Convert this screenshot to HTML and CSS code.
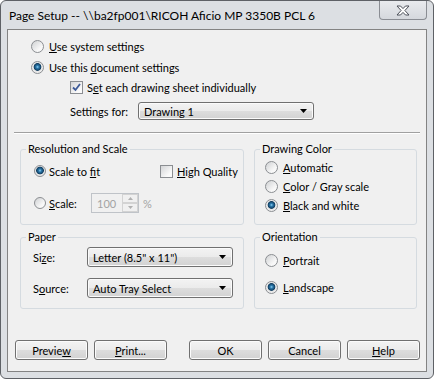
FILE: index.html
```html
<!DOCTYPE html>
<html lang="en">
<head>
    <meta charset="UTF-8">
    <meta name="viewport" content="width=device-width, initial-scale=1.0">
    <title>Page Setup</title>
    <link rel="stylesheet" href="styles.css">
</head>
<body>
    <div class="window">
        <div class="titlebar">
            <span class="title">Page Setup -- \\ba2fp001\RICOH Aficio MP 3350B PCL 6</span>
            <div class="close-btn">
                <svg width="14" height="11" viewBox="0 0 14 11">
                    <path d="M1 1 H4.5 L7 3.6 L9.5 1 H13 L8.9 5.5 L13 10 H9.5 L7 7.4 L4.5 10 H1 L5.1 5.5 Z" fill="#fff" stroke="#4b4f58" stroke-width="1" stroke-linejoin="round"/>
                </svg>
            </div>
        </div>

        <div class="client">
            <div class="top">
                <div class="row">
                    <span class="radio"></span>
                    <span><u>U</u>se system settings</span>
                </div>
                <div class="row row-2">
                    <span class="radio on"></span>
                    <span>Use this <u>d</u>ocument settings</span>
                </div>
                <div class="row row-indent">
                    <span class="check on">
                        <svg width="11" height="11" viewBox="0 0 11 11"><path d="M2 5.5 L4.5 8 L9 2" fill="none" stroke="#3d5a98" stroke-width="1.8"/></svg>
                    </span>
                    <span>S<u>e</u>t each drawing sheet individually</span>
                </div>
                <div class="row row-indent row-settings">
                    <span class="settings-label">Settings for:</span>
                    <div class="combo combo-wide">
                        <span>Drawing 1</span>
                        <svg width="7" height="4" viewBox="0 0 7 4"><path d="M0 0 H7 L3.5 4 Z" fill="#000"/></svg>
                    </div>
                </div>
            </div>

            <div class="sep"></div>

            <div class="groups">
                <fieldset class="group">
                    <legend>Resolution and Scale</legend>
                    <div class="group-body res-body">
                        <div class="row">
                            <span class="radio on res-radio"></span>
                            <span class="fit-label">Scale to <u>f</u>it</span>
                            <span class="check"></span>
                            <span><u>H</u>igh Quality</span>
                        </div>
                        <div class="row res-scale">
                            <span class="radio res-radio"></span>
                            <span class="scale-label"><u>S</u>cale:</span>
                            <div class="spin">
                                <span class="spin-value">100</span>
                                <div class="spin-btns">
                                    <span class="spin-btn"><svg width="5" height="3" viewBox="0 0 5 3"><path d="M0 3 H5 L2.5 0 Z" fill="#b0b0b0"/></svg></span>
                                    <span class="spin-btn"><svg width="5" height="3" viewBox="0 0 5 3"><path d="M0 0 H5 L2.5 3 Z" fill="#b0b0b0"/></svg></span>
                                </div>
                            </div>
                            <span class="disabled">%</span>
                        </div>
                    </div>
                </fieldset>

                <fieldset class="group">
                    <legend>Drawing Color</legend>
                    <div class="group-body color-body">
                        <div class="row">
                            <span class="radio"></span>
                            <span><u>A</u>utomatic</span>
                        </div>
                        <div class="row">
                            <span class="radio"></span>
                            <span><u>C</u>olor / Gray scale</span>
                        </div>
                        <div class="row">
                            <span class="radio on"></span>
                            <span><u>B</u>lack and white</span>
                        </div>
                    </div>
                </fieldset>

                <fieldset class="group">
                    <legend>Paper</legend>
                    <div class="group-body paper-body">
                        <div class="row">
                            <span class="field-label">Si<u>z</u>e:</span>
                            <div class="combo">
                                <span>Letter (8.5" x 11")</span>
                                <svg width="7" height="4" viewBox="0 0 7 4"><path d="M0 0 H7 L3.5 4 Z" fill="#000"/></svg>
                            </div>
                        </div>
                        <div class="row">
                            <span class="field-label">S<u>o</u>urce:</span>
                            <div class="combo">
                                <span>Auto Tray Select</span>
                                <svg width="7" height="4" viewBox="0 0 7 4"><path d="M0 0 H7 L3.5 4 Z" fill="#000"/></svg>
                            </div>
                        </div>
                    </div>
                </fieldset>

                <fieldset class="group">
                    <legend>Orientation</legend>
                    <div class="group-body orient-body">
                        <div class="row">
                            <span class="radio"></span>
                            <span><u>P</u>ortrait</span>
                        </div>
                        <div class="row">
                            <span class="radio on"></span>
                            <span><u>L</u>andscape</span>
                        </div>
                    </div>
                </fieldset>
            </div>

            <div class="buttons">
                <button class="btn">Previe<u>w</u></button>
                <button class="btn"><u>P</u>rint...</button>
                <button class="btn btn-ok">OK</button>
                <button class="btn">Cancel</button>
                <button class="btn"><u>H</u>elp</button>
            </div>
        </div>
    </div>
</body>
</html>
```

FILE: styles.css
```css
body {
    margin: 0;
    background: #fff;
    font-family: Lato, "Liberation Sans", sans-serif;
    font-size: 11px;
    color: #000;
}
.window {
    box-sizing: border-box;
    width: 434px;
    height: 379px;
    border: 1px solid #5e6166;
    border-radius: 6px;
    background: #dcdfe3;
    padding: 0 6px 6px 6px;
    display: flex;
    flex-direction: column;
}
.titlebar {
    height: 28px;
    display: flex;
    justify-content: space-between;
    align-items: flex-start;
}
.title {
    padding: 7px 0 0 2px;
    font-size: 12px;
    line-height: 16px;
}
.close-btn {
    box-sizing: border-box;
    width: 48px;
    height: 19px;
    border: 1px solid #8a8d93;
    border-top: none;
    border-radius: 0 0 4px 4px;
    background: linear-gradient(#e9ebee, #d5d8dd);
    display: flex;
    align-items: center;
    justify-content: center;
}
.client {
    flex: 1;
    border: 1px solid #838383;
    background: #f0f0f0;
    display: flex;
    flex-direction: column;
}
.row {
    height: 20px;
    display: flex;
    align-items: center;
    white-space: nowrap;
}
.top {
    padding: 6px 0 0 23px;
}
.row-2 {
    margin-top: 1px;
}
.row-indent {
    padding-left: 39px;
}
.row-settings {
    margin-top: 4px;
}
.settings-label {
    width: 68px;
}
.radio {
    box-sizing: border-box;
    width: 13px;
    height: 13px;
    border-radius: 50%;
    border: 1px solid #8b8e92;
    background: linear-gradient(135deg, #cfd1d3, #f8f8f8 70%);
    margin-right: 5px;
    flex: none;
}
.radio.on {
    background: radial-gradient(circle at 50% 45%, #8fd3f5 0, #2a77aa 1.5px, #123e60 3.5px, #e6e6e6 4.2px, #f8f8f8 100%);
}
.check {
    box-sizing: border-box;
    width: 13px;
    height: 13px;
    border: 1px solid #8b8e92;
    background: linear-gradient(135deg, #d4d5d7, #fafafa 75%);
    margin-right: 4px;
    flex: none;
    display: flex;
    align-items: center;
    justify-content: center;
}
.combo {
    box-sizing: border-box;
    width: 146px;
    height: 20px;
    border: 1px solid #707070;
    border-radius: 3px;
    background: linear-gradient(#f3f3f3 0%, #ebebeb 50%, #dddddd 51%, #d2d2d2 100%);
    box-shadow: inset 0 0 0 1px #fbfbfb;
    display: flex;
    align-items: center;
    justify-content: space-between;
    padding: 0 6px 0 5px;
}
.combo-wide {
    width: 176px;
    height: 18px;
}
.sep {
    margin: 11px 6px 0 6px;
    border-top: 1px solid #a0a0a0;
    border-bottom: 1px solid #fff;
}
.groups {
    margin: 8px 0 0 12px;
    display: grid;
    grid-template-columns: 224px 163px;
    grid-template-rows: 83px 79px;
    column-gap: 10px;
    row-gap: 5px;
}
.group {
    margin: 0;
    padding: 0;
    border: 1px solid #d5dbe0;
    border-radius: 3px;
    min-width: 0;
}
.group legend {
    margin-left: 5px;
    padding: 0 2px;
    line-height: 14px;
}
.res-body {
    padding: 5px 0 0 13px;
}
.res-radio {
    width: 12px;
    height: 12px;
    margin-right: 3px;
}
.fit-label {
    width: 111px;
}
.res-scale {
    margin-top: 12px;
}
.scale-label {
    width: 42px;
}
.spin {
    box-sizing: border-box;
    width: 48px;
    height: 20px;
    border: 1px solid #bfc3c8;
    background: #f0f0f0;
    display: flex;
    align-items: center;
    justify-content: space-between;
    padding-left: 5px;
    margin-right: 4px;
}
.spin-value,
.disabled {
    color: #a3a3a3;
}
.spin-btns {
    width: 16px;
    height: 18px;
    display: flex;
    flex-direction: column;
}
.spin-btn {
    box-sizing: border-box;
    flex: 1;
    border: 1px solid #d3d3d3;
    display: flex;
    align-items: center;
    justify-content: center;
}
.color-body {
    padding: 2px 0 0 10px;
}
.color-body .row {
    height: 19px;
}
.paper-body {
    padding: 3px 0 0 12px;
}
.paper-body .row + .row {
    margin-top: 11px;
}
.field-label {
    width: 54px;
}
.orient-body {
    padding: 6px 0 0 10px;
}
.orient-body .row + .row {
    margin-top: 7px;
}
.buttons {
    margin: 31px 0 0 7px;
    display: flex;
    gap: 6px;
}
.btn {
    box-sizing: border-box;
    width: 73px;
    height: 20px;
    padding: 0;
    border: 1px solid #707070;
    border-radius: 3px;
    background: linear-gradient(#f3f3f3 0%, #ebebeb 50%, #dddddd 51%, #d2d2d2 100%);
    box-shadow: inset 0 0 0 1px #fbfbfb;
    font-family: inherit;
    font-size: 11px;
    color: #000;
}
.btn-ok {
    margin-left: 16px;
}
```
